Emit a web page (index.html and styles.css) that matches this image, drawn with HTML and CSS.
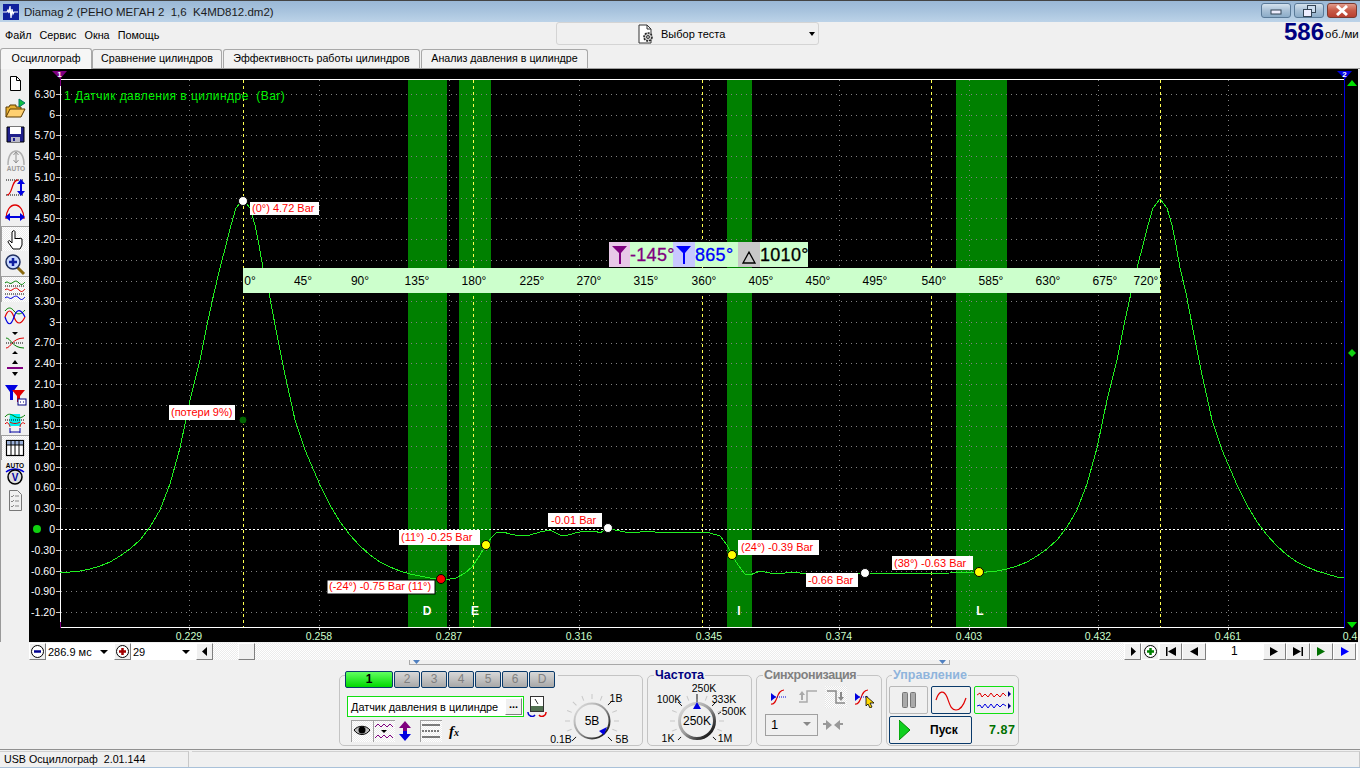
FILE: index.html
```html
<!DOCTYPE html>
<html lang="ru">
<head>
    <meta charset="UTF-8">
    <title>Diamag 2</title>
    <link rel="stylesheet" href="styles.css">
</head>
<body>
<div class="window">
    <!-- заголовок окна -->
    <div class="titlebar">
        <svg class="app-icon" width="16" height="16" viewBox="0 0 16 16"><rect width="16" height="16" fill="#10209c"/><path d="M0 8h4l1-2 1 3 1-7 1 12 1-9 1 5 1-2h4" fill="none" stroke="#fff" stroke-width="1.2"/></svg>
        <span class="title-text">Diamag 2 (РЕНО МЕГАН 2&nbsp; 1,6&nbsp; K4MD812.dm2)</span>
        <div class="win-buttons">
            <div class="win-btn"><svg width="12" height="8" viewBox="0 0 12 8"><rect x="1" y="3" width="10" height="4" fill="#eef" stroke="#345"/></svg></div>
            <div class="win-btn"><svg width="13" height="12" viewBox="0 0 13 12"><rect x="4.5" y=".5" width="8" height="7" fill="#cde" stroke="#345"/><rect x=".5" y="4.5" width="8" height="7" fill="#eef" stroke="#345"/></svg></div>
            <div class="win-btn win-close"><svg width="14" height="11" viewBox="0 0 14 11"><path d="M2 1l10 9M12 1L2 10" stroke="#fff" stroke-width="3"/></svg></div>
        </div>
    </div>

    <!-- меню -->
    <div class="menubar">
        <div class="menu">
            <span>Файл</span><span>Сервис</span><span>Окна</span><span>Помощь</span>
        </div>
        <div class="test-select">
            <svg width="20" height="20" viewBox="0 0 20 20"><path d="M3 1h8l4 4v14H3z" fill="#fff" stroke="#333"/><path d="M11 1v4h4" fill="none" stroke="#333"/><circle cx="12" cy="13" r="4" fill="#ccc" stroke="#222" stroke-width="1.6" stroke-dasharray="2 1"/><circle cx="12" cy="13" r="1.4" fill="#fff" stroke="#222"/></svg>
            <span>Выбор теста</span>
            <i class="select-arrow"></i>
        </div>
        <div class="rpm"><b>586</b><span>об./ми</span></div>
    </div>

    <!-- вкладки -->
    <div class="tabs">
        <div class="tab tab-active">Осциллограф</div>
        <div class="tab tab-2">Сравнение цилиндров</div>
        <div class="tab tab-3">Эффективность работы цилиндров</div>
        <div class="tab tab-4">Анализ давления в цилиндре</div>
    </div>

    <div class="main">
        <!-- панель инструментов -->
        <div class="toolbar">
            <div class="tool h27"><svg width="24" height="24" viewBox="0 0 24 24"><path d="M7.5 5.5h6l4 4v10h-10z" fill="#fff" stroke="#000"/><path d="M13.5 5.5v4h4" fill="none" stroke="#000"/></svg></div>
            <div class="tool h26"><svg width="24" height="24" viewBox="0 0 24 24"><path d="M3 20V10h3l1-2h6v2h5v3" fill="#e8b030" stroke="#5a3a00"/><path d="M3 20l4-8h15l-4 8z" fill="#ffd070" stroke="#5a3a00"/><path d="M16 2l6 4-6 4z" fill="#10c040" stroke="#076"/></svg></div>
            <div class="tool h24"><svg width="24" height="24" viewBox="0 0 24 24"><path d="M4 5h17v15H4z" fill="#20208c" stroke="#000"/><rect x="7" y="5" width="11" height="7" fill="#fff"/><rect x="8" y="15" width="9" height="5" fill="#b8b8c8"/><rect x="10" y="16" width="2" height="3" fill="#20208c"/></svg></div>
            <div class="tool h28"><svg width="24" height="24" viewBox="0 0 24 24"><path d="M5 17c0-10 4-14 8-14s8 4 8 14" fill="none" stroke="#b0b0b0" stroke-width="1.5"/><path d="M13 5v9M10.500 7l2.500-3 2.500 3M10.500 12l2.500 3 2.500-3" fill="none" stroke="#909090"/><text class="auto-text auto-gray" x="13" y="23">AUTO</text></svg></div>
            <div class="tool h26"><svg width="24" height="24" viewBox="0 0 24 24"><path d="M3 5h18M3 20h18" stroke="#000" stroke-dasharray="1 1"/><path d="M4 20c6 0 4-15 11-15" fill="none" stroke="#e00000" stroke-width="1.3"/><path d="M18 6v13" stroke="#0000e0" stroke-width="2"/><path d="M14 9l4-5 4 5zM14 16l4 5 4-5z" fill="#0000e0"/></svg></div>
            <div class="tool h26"><svg width="24" height="24" viewBox="0 0 24 24"><path d="M3 18c0-8 4-14 9-14s9 6 9 14" fill="none" stroke="#e00000" stroke-width="1.3"/><path d="M5 16h14" stroke="#0000e0" stroke-width="2"/><path d="M7 12l-5 4 5 4zM17 12l5 4-5 4z" fill="#0000e0"/></svg></div>
            <div class="tool h25 pressed"><svg width="24" height="24" viewBox="0 0 24 24"><path d="M10 4c1-1 2 0 2 1v7l1-1 1 1 1-1 1 1 1-1 2 1v6l-2 4h-7l-5-7c0-1 1-2 2-1l2 2V5z" fill="#fff" stroke="#000"/></svg></div>
            <div class="tool h25"><svg width="24" height="24" viewBox="0 0 24 24"><path d="M14 15l7 7" stroke="#8a6a10" stroke-width="3"/><circle cx="10" cy="10" r="7" fill="#c8d8ff" stroke="#203060" stroke-width="1.500"/><path d="M6 10h8M10 6v8" stroke="#1020a0" stroke-width="2.500"/></svg></div>
            <div class="tool h26 pressed"><svg width="24" height="24" viewBox="0 0 24 24"><path d="M2 6c3-3 4 2 7 0s4-3 7 0 4 1 6-1" fill="none" stroke="#008000"/><path d="M2 9h20M2 17h20" stroke="#000" stroke-dasharray="1 1"/><path d="M2 13c3-3 4 2 7 0s4-3 7 0 4 1 6-1" fill="none" stroke="#e00000"/><path d="M2 21c3-3 4 2 7 0s4-3 7 0 4 1 6-1" fill="none" stroke="#0000e0"/></svg></div>
            <div class="tool h28"><svg width="24" height="24" viewBox="0 0 24 24"><path d="M2 7c3-4 6-4 9 0s7 4 11-1" fill="none" stroke="#008000"/><path d="M2 13c3-8 6-8 9 0s7 8 11 0" fill="none" stroke="#e00000" stroke-width="1.200"/><path d="M2 13c3 9 6 9 9 0s7-8 11 0" fill="none" stroke="#0000e0" stroke-width="1.200"/></svg></div>
            <div class="tool h25"><svg width="24" height="24" viewBox="0 0 24 24"><path d="M9 1h6l-3 3zM9 23h6l-3-3z" fill="#000"/><path d="M3 7c5 0 6 10 18 10" fill="none" stroke="#008000"/><path d="M3 17c5 0 6-10 18-10" fill="none" stroke="#e00000"/><path d="M3 12h18" stroke="#000" stroke-dasharray="1 1"/></svg></div>
            <div class="tool h25"><svg width="24" height="24" viewBox="0 0 24 24"><path d="M9 8l3-4 3 4zM9 16l3 4 3-4z" fill="#000"/><rect x="4" y="11" width="16" height="2" fill="#800080"/></svg></div>
            <div class="tool h28"><svg width="24" height="24" viewBox="0 0 24 24"><path d="M2 3h13l-5 7v8l-3 0v-8z" fill="#0000e0"/><path d="M9 8h13l-5 6v6h-3v-6z" fill="#e00000"/><rect x="15" y="17" width="8" height="6" fill="#fff" stroke="#000080"/><path d="M17 20h1M20 20h1" stroke="#000080"/></svg></div>
            <div class="tool h27"><svg width="24" height="24" viewBox="0 0 24 24"><path d="M7 4h10l1 12H6z" fill="#00f0f0"/><path d="M2 7c3-4 6-3 9-1s7 3 11-1" fill="none" stroke="#008000"/><path d="M2 10h20" stroke="#000" stroke-dasharray="1 1"/><path d="M2 14c3-4 5 2 5 3M17 17c0-3 3-6 5-3M7 12c3 2 7 2 10 0" fill="none" stroke="#e00000"/><path d="M7 22h10M7 18v5M17 18v5" stroke="#0000a0"/></svg></div>
            <div class="tool h25 pressed"><svg width="24" height="24" viewBox="0 0 24 24"><rect x="3.500" y="4.500" width="17" height="15" fill="#fff" stroke="#000" stroke-width="1.200"/><rect x="4" y="5" width="16" height="4" fill="#9ab0d8"/><path d="M4 9h16M8 5v14M12 5v14M16 5v14" stroke="#000"/></svg></div>
            <div class="tool h27"><svg width="24" height="24" viewBox="0 0 24 24"><text class="auto-text" x="12" y="6">AUTO</text><path d="M3 10c5-4 13-4 18 0" fill="none" stroke="#0000e0" stroke-width="1.500"/><circle cx="12" cy="15" r="7" fill="#ddd" stroke="#000" stroke-width="1.500"/><text class="auto-text auto-v" x="12" y="18.500">V</text></svg></div>
            <div class="tool h26"><svg width="24" height="24" viewBox="0 0 24 24"><path d="M6.500 2.500h8l4 4v16h-12z" fill="#f0f0f0" stroke="#777"/><path d="M8 8l1 1 2-2M8 13l1 1 2-2M8 18l1 1 2-2M12 8h4M12 13h4M12 18h4" fill="none" stroke="#888"/></svg></div>
        </div>

        <!-- экран осциллографа -->
        <svg class="scope" width="1329" height="573" viewBox="29 69 1329 573">
            <rect x="29" y="69" width="1329" height="573" fill="#000"/>
            <g fill="#008000">
                <rect x="408" y="79" width="39" height="548"/>
                <rect x="459" y="79" width="32" height="548"/>
                <rect x="727" y="79" width="25" height="548"/>
                <rect x="956" y="79" width="51" height="548"/>
            </g>
            <path class="grid" d="M61 94H1344M61 115H1344M61 135H1344M61 156H1344M61 177H1344M61 198H1344M61 218H1344M61 239H1344M61 260H1344M61 281H1344M61 301H1344M61 322H1344M61 343H1344M61 363H1344M61 384H1344M61 405H1344M61 426H1344M61 446H1344M61 467H1344M61 488H1344M61 508H1344M61 550H1344M61 571H1344M61 591H1344M61 612H1344"/>
            <path class="grid" d="M189 80V627M319 80V627M449 80V627M579 80V627M709 80V627M839 80V627M969 80V627M1098 80V627M1228 80V627"/>
            <path class="ticks" d="M56 94h4M56 115h4M56 135h4M56 156h4M56 177h4M56 198h4M56 218h4M56 239h4M56 260h4M56 281h4M56 301h4M56 322h4M56 343h4M56 363h4M56 384h4M56 405h4M56 426h4M56 446h4M56 467h4M56 488h4M56 508h4M56 529h4M56 550h4M56 571h4M56 591h4M56 612h4M189 627v3M319 627v3M449 627v3M579 627v3M709 627v3M839 627v3M969 627v3M1098 627v3M1228 627v3"/>
            <path class="frame" d="M60.500 79.500H1344M60.500 80V627.500M60 627.500H1344"/>
            <path class="marker" d="M60.500 78v8M60.500 622v6" stroke="#800080"/>
            <path class="marker" d="M1344.500 76V628" stroke="#0000e0"/>
            <path class="tdc" d="M243.500 80V627M473.500 80V627M702.500 80V627M931.500 80V627M1160.500 80V627"/>
            <path class="zero" d="M61 529.500H1344"/>

            <polyline class="trace" points="60,573 70,572 80,571 90,569 100,566 110,562 120,556 130,549 140,540 150,527 160,510 170,484 180,448 190,400 200,360 207,325 214,293 220,268 226,245 231,225 236,208 243,199 250,208 255,225 259,245 263,268 269,293 276,330 284,370 295,420 305,450 320,485 330,505 340,522 350,535 360,546 370,555 380,562 390,567 400,571 410,574 420,576 430,578 441,579 450,579 456,578 465,573 472,567 480,555 486,545 492,537 497,532 503,532 510,534 520,536 530,535 540,532 550,530 560,535 565,536 575,533 585,531 595,531 600,533 608,528 615,530 625,532 640,532 650,531 660,533 670,532 680,533 690,532 700,532 710,533 720,536 727,545 732,555 738,565 745,574 750,575 760,571 770,573 780,574 790,572 800,573 810,574 820,573 840,574 865,573 900,574 950,573 979,572 987,572 997,571 1007,569 1017,566 1027,562 1037,556 1047,549 1057,540 1067,527 1077,510 1087,484 1097,448 1107,400 1117,360 1124,325 1131,293 1137,268 1143,245 1148,225 1153,208 1160,199 1167,208 1172,225 1176,245 1180,268 1186,293 1193,330 1201,370 1212,420 1222,450 1237,485 1247,505 1257,522 1267,535 1277,546 1287,555 1297,562 1307,567 1317,571 1327,574 1337,577 1344,578"/>

            <text class="ylab" x="55" y="98">6.30</text><text class="ylab" x="55" y="118">6</text><text class="ylab" x="55" y="139">5.70</text><text class="ylab" x="55" y="160">5.40</text><text class="ylab" x="55" y="181">5.10</text><text class="ylab" x="55" y="202">4.80</text><text class="ylab" x="55" y="222">4.50</text><text class="ylab" x="55" y="243">4.20</text><text class="ylab" x="55" y="264">3.90</text><text class="ylab" x="55" y="284">3.60</text><text class="ylab" x="55" y="305">3.30</text><text class="ylab" x="55" y="326">3</text><text class="ylab" x="55" y="346">2.70</text><text class="ylab" x="55" y="367">2.40</text><text class="ylab" x="55" y="388">2.10</text><text class="ylab" x="55" y="408">1.80</text><text class="ylab" x="55" y="429">1.50</text><text class="ylab" x="55" y="450">1.20</text><text class="ylab" x="55" y="471">0.90</text><text class="ylab" x="55" y="491">0.60</text><text class="ylab" x="55" y="512">0.30</text><text class="ylab" x="55" y="533">0</text><text class="ylab" x="55" y="554">-0.30</text><text class="ylab" x="55" y="575">-0.60</text><text class="ylab" x="55" y="595">-0.90</text><text class="ylab" x="55" y="616">-1.20</text>
            <text class="xlab" x="189" y="640">0.229</text><text class="xlab" x="319" y="640">0.258</text><text class="xlab" x="449" y="640">0.287</text><text class="xlab" x="579" y="640">0.316</text><text class="xlab" x="709" y="640">0.345</text><text class="xlab" x="839" y="640">0.374</text><text class="xlab" x="969" y="640">0.403</text><text class="xlab" x="1098" y="640">0.432</text><text class="xlab" x="1228" y="640">0.461</text><text class="xlab" x="1350" y="640">0.4</text>

            <text class="chan-title" x="64" y="100">1 Датчик давления в цилиндре&#160; (Bar)</text>
            <text class="band" x="427" y="615">D</text><text class="band" x="475" y="615">E</text><text class="band" x="739" y="615">I</text><text class="band" x="980" y="615">L</text>

            <!-- шкала градусов -->
            <rect x="243" y="268" width="917" height="25" fill="#ccffcc"/>
            <g class="deg">
                <text x="250" y="285">0°</text><text x="303" y="285">45°</text><text x="360" y="285">90°</text><text x="417" y="285">135°</text><text x="474" y="285">180°</text><text x="532" y="285">225°</text><text x="589" y="285">270°</text><text x="646" y="285">315°</text><text x="704" y="285">360°</text><text x="761" y="285">405°</text><text x="818" y="285">450°</text><text x="875" y="285">495°</text><text x="934" y="285">540°</text><text x="991" y="285">585°</text><text x="1048" y="285">630°</text><text x="1105" y="285">675°</text><text x="1146" y="285">720°</text>
            </g>

            <!-- метки -->
            <g class="tag">
                <rect x="250" y="202" width="69" height="13"/><text x="252" y="212">(0°) 4.72 Bar</text>
                <rect x="169" y="405" width="66" height="15"/><text x="171" y="416">(потери 9%)</text>
                <rect x="399" y="530" width="81" height="15"/><text x="401" y="541">(11°) -0.25 Bar</text>
                <rect x="327" y="580" width="108" height="14" class="tag-dark"/><text x="329" y="590">(-24°) -0.75 Bar (11°)</text>
                <rect x="548" y="513" width="54" height="14"/><text x="551" y="524">-0.01 Bar</text>
                <rect x="738" y="540" width="81" height="15"/><text x="741" y="551">(24°) -0.39 Bar</text>
                <rect x="806" y="573" width="52" height="14"/><text x="808" y="584">-0.66 Bar</text>
                <rect x="892" y="556" width="81" height="14"/><text x="894" y="567">(38°) -0.63 Bar</text>
            </g>
            <circle class="dot" cx="243" cy="201" r="4.500" fill="#fff"/>
            <circle class="dot" cx="243" cy="420" r="4" fill="#006400"/>
            <circle class="dot" cx="441" cy="579" r="4.500" fill="#f00"/>
            <circle class="dot" cx="486" cy="545" r="4.500" fill="#ff0"/>
            <circle class="dot" cx="608" cy="528" r="4.500" fill="#fff"/>
            <circle class="dot" cx="732" cy="555" r="4.500" fill="#ff0"/>
            <circle class="dot" cx="865" cy="573" r="4.500" fill="#fff"/>
            <circle class="dot" cx="979" cy="572" r="4.500" fill="#ff0"/>
            <circle cx="37" cy="529" r="4" fill="#10d010"/>

            <!-- курсоры -->
            <path d="M52 71h15l-7 8z" fill="#800080"/><text class="cur-num" x="59.500" y="77">1</text>
            <path d="M1337 71h15l-7 8z" fill="#0000e0"/><text class="cur-num" x="1344.500" y="77">2</text>
            <path d="M1347 86l5-6 5 6zM1347 622l5 6 5-6z" fill="#00e000"/>
            <path d="M1352 349l4 4-4 4-4-4z" fill="#10d010"/>

            <!-- табло углов -->
            <rect x="609" y="242" width="199" height="25" fill="#ccffcc"/>
            <rect x="609" y="242" width="21" height="25" fill="#e8c8e8"/>
            <rect x="673" y="242" width="22" height="25" fill="#c8c8ff"/>
            <rect x="738" y="242" width="22" height="25" fill="#c8c8c8"/>
            <path d="M612 246h15l-6 7v11h-2v-11z" fill="#800080"/>
            <path d="M676 246h15l-6 7v11h-2v-11z" fill="#0000ff"/>
            <path d="M743 263l6-11 6 11z" fill="none" stroke="#000" stroke-width="1.300"/>
            <svg x="609" y="242" width="199" height="25" viewBox="609 242 199 25">
                <text class="angle angle-purple" x="630" y="261">-145°</text>
                <text class="angle angle-blue" x="695" y="261">865°</text>
                <text class="angle angle-black" x="760" y="261">1010°</text>
            </svg>
        </svg>
    </div>

    <!-- полоса прокрутки -->
    <div class="strip">
        <div class="sbtn"><svg width="15" height="15" viewBox="0 0 15 15"><circle cx="7.500" cy="7.500" r="6" fill="#fff" stroke="#000"/><path d="M4 7.500h7" stroke="#000090" stroke-width="2.500"/></svg></div>
        <div class="combo combo-time"><span>286.9 мс</span><i class="combo-arrow"></i></div>
        <div class="sbtn"><svg width="15" height="15" viewBox="0 0 15 15"><circle cx="7.500" cy="7.500" r="6" fill="#fff" stroke="#000"/><path d="M4 7.500h7M7.500 4v7" stroke="#a00000" stroke-width="2.500"/></svg></div>
        <div class="combo combo-num"><span>29</span><i class="combo-arrow"></i></div>
        <div class="sbtn"><svg width="8" height="9" viewBox="0 0 8 9"><path d="M6 0v9L1 4.500z"/></svg></div>
        <div class="track"><div class="thumb"></div></div>
        <div class="sbtn"><svg width="8" height="9" viewBox="0 0 8 9"><path d="M2 0v9l5-4.500z"/></svg></div>
        <div class="sbtn sbtn-plain"><svg width="15" height="15" viewBox="0 0 15 15"><circle cx="7.500" cy="7.500" r="6" fill="#fff" stroke="#000"/><path d="M4 7.500h7M7.500 4v7" stroke="#008000" stroke-width="2.500"/></svg></div>
        <div class="sbtn wide"><svg width="12" height="9" viewBox="0 0 12 9"><path d="M1 0h1.500v9H1zM11 0v9L3 4.500z"/></svg></div>
        <div class="sbtn wide"><svg width="12" height="9" viewBox="0 0 12 9"><path d="M10 0v9L2 4.500z"/></svg></div>
        <div class="page-num">1</div>
        <div class="sbtn wide"><svg width="12" height="9" viewBox="0 0 12 9"><path d="M2 0v9l8-4.500z"/></svg></div>
        <div class="sbtn wide"><svg width="12" height="9" viewBox="0 0 12 9"><path d="M1 0v9l8-4.500zM9.500 0H11v9H9.500z"/></svg></div>
        <div class="sbtn wide"><svg width="12" height="9" viewBox="0 0 12 9"><path d="M2 0v9l8-4.500z" fill="#007000"/></svg></div>
        <div class="sbtn wide"><svg width="12" height="9" viewBox="0 0 12 9"><path d="M2 0v9l8-4.500z" fill="#0000ff"/></svg></div>
    </div>

    <div class="splitter">
        <svg width="7" height="4" viewBox="0 0 7 4"><path d="M0 0h7L3.500 4z" fill="#5080c0"/></svg>
        <svg width="7" height="4" viewBox="0 0 7 4"><path d="M0 0h7L3.500 4z" fill="#5080c0"/></svg>
    </div>

    <!-- нижняя панель -->
    <div class="dock">
        <div class="group group-chan">
            <div class="chan-tabs">
                <div class="chan-tab chan-on">1</div><div class="chan-tab">2</div><div class="chan-tab">3</div><div class="chan-tab">4</div><div class="chan-tab">5</div><div class="chan-tab">6</div><div class="chan-tab">D</div>
            </div>
            <div class="chan-left">
                <div class="chan-row">
                    <div class="sensor"><span>Датчик давления в цилиндре</span><div class="dots">...</div></div>
                    <svg class="meter" width="20" height="21" viewBox="0 0 20 21"><rect x="3.500" y=".5" width="13" height="15" fill="#fff" stroke="#333"/><path d="M8 3l3 5" stroke="#333"/><rect x="4" y="10" width="12" height="5" fill="#507050"/><path d="M1 16a4 4 0 0 0 7 3" fill="none" stroke="#0000d0" stroke-width="1.500"/><path d="M19 16a4 4 0 0 1-7 3" fill="none" stroke="#e00000" stroke-width="1.500"/></svg>
                </div>
                <div class="chan-icons">
                    <div class="mini pressed"><svg width="20" height="18" viewBox="0 0 20 18"><path d="M2 8c4-5 12-5 16 0-4 6-12 6-16 0z" fill="#bbb" stroke="#000"/><circle cx="10" cy="8" r="3.500" fill="#000"/></svg></div>
                    <div class="mini pressed"><svg width="20" height="20" viewBox="0 0 20 20"><path d="M1 6l3-3 3 3 3-3 3 3 3-3 3 3M1 17l3-3 3 3 3-3 3 3 3-3 3 3" fill="none" stroke="#800080"/><path d="M7 9h6l-3 3z" fill="#000"/></svg></div>
                    <svg class="mini-plain" width="14" height="20" viewBox="0 0 14 20"><path d="M7 0l6 7H9v3H5V7H1z" fill="#800080"/><path d="M7 20l6-7H9v-3H5v3H1z" fill="#0000e0"/></svg>
                    <div class="mini pressed mini-lines"><svg width="20" height="18" viewBox="0 0 20 18"><path d="M1 3h18M1 15h18" stroke="#000" stroke-width="1.200"/><path d="M1 9h18" stroke="#000" stroke-dasharray="2 1"/></svg></div>
                    <span class="fx"><i>f</i><small>x</small></span>
                </div>
            </div>
            <svg class="knob" width="91" height="69" viewBox="548 676 91 69">
                <defs>
                    <linearGradient id="ringGrad" x1="0" y1="0" x2="1" y2="1"><stop offset="0" stop-color="#e8e8e8"/><stop offset=".5" stop-color="#999"/><stop offset=".85" stop-color="#222"/></linearGradient>
                    <g id="knobTicks" stroke="#c8c8c8">
                        <path d="M0-22v-5" transform="rotate(-135)"/><path d="M0-22v-5" transform="rotate(-112)"/><path d="M0-22v-5" transform="rotate(-90)"/><path d="M0-22v-5" transform="rotate(-67)"/><path d="M0-22v-5" transform="rotate(-45)"/><path d="M0-22v-5" transform="rotate(-22)"/><path d="M0-22v-5"/><path d="M0-22v-5" transform="rotate(22)"/><path d="M0-22v-5" transform="rotate(45)"/><path d="M0-22v-5" transform="rotate(67)"/><path d="M0-22v-5" transform="rotate(90)"/><path d="M0-22v-5" transform="rotate(112)"/><path d="M0-22v-5" transform="rotate(135)"/>
                    </g>
                </defs>
                <use href="#knobTicks" x="592" y="721"/>
                <path d="M608 705l4-4M608 737l4 4M576 737l-4 4" stroke="#222"/>
                <circle cx="592" cy="721" r="17.500" fill="#f0f0f0" stroke="url(#ringGrad)" stroke-width="2"/>
                <path d="M607 727l-8 4 5 4z" fill="#0000e0"/>
                <text class="knob-mid" x="592" y="725">5В</text>
                <text class="knob-lab" x="616" y="702">1В</text>
                <text class="knob-lab" x="561" y="743">0.1В</text>
                <text class="knob-lab" x="622" y="743">5В</text>
            </svg>
        </div>

        <div class="group group-freq">
            <div class="legend legend-freq">Частота</div>
            <svg class="knob" width="103" height="69" viewBox="647 676 103 69">
                <use href="#knobTicks" x="696" y="721"/>
                <path d="M696 702v-8M681 706l-4-4M711 706l4-4M717 714l3-2M680 737l-3 3M712 737l3 3" stroke="#222"/>
                <circle cx="696" cy="721" r="17.500" fill="#f0f0f0" stroke="url(#ringGrad)" stroke-width="3"/>
                <path d="M696 702l4 7h-8z" fill="#0000e0"/>
                <text class="knob-mid" x="696" y="725">250K</text>
                <text class="knob-lab" x="703" y="692">250K</text>
                <text class="knob-lab" x="668" y="703">100K</text>
                <text class="knob-lab" x="723" y="703">333K</text>
                <text class="knob-lab" x="733" y="715">500K</text>
                <text class="knob-lab" x="667" y="742">1K</text>
                <text class="knob-lab" x="724" y="742">1M</text>
            </svg>
        </div>

        <div class="group group-sync">
            <div class="legend legend-sync">Синхронизация</div>
            <div class="sync-icons">
                <svg width="22" height="22" viewBox="0 0 22 22"><path d="M2 18c7 1 5-14 13-14" fill="none" stroke="#e00000" stroke-width="1.200"/><path d="M6 11h12" stroke="#0000e0" stroke-dasharray="1 1"/><path d="M2 7l5 4-5 4z" fill="#0000e0"/></svg>
                <svg width="22" height="22" viewBox="0 0 22 22"><path d="M2 16h8V5h10" fill="none" stroke="#aaa" stroke-width="1.500"/><path d="M5 5l3 4H6v5H4V9H2z" fill="#aaa"/></svg>
                <div class="sync-pressed"><svg width="22" height="22" viewBox="0 0 22 22"><path d="M2 5h9v12h9" fill="none" stroke="#888" stroke-width="1.500"/><path d="M15 6h2v5h2l-3 4-3-4h2z" fill="#888"/></svg></div>
                <svg width="22" height="22" viewBox="0 0 22 22"><path d="M2 18c7 1 5-14 13-14" fill="none" stroke="#e00000" stroke-width="1.200"/><path d="M6 11h10" stroke="#0000e0" stroke-dasharray="1 1"/><path d="M2 7l5 4-5 4z" fill="#0000e0"/><path d="M13 10l8 7-4 0 2 4-2 1-2-4-2 2z" fill="#ffd800" stroke="#000" stroke-width=".8"/></svg>
            </div>
            <div class="sync-row">
                <div class="sync-combo"><span>1</span><i class="combo-arrow combo-gray"></i></div>
                <svg width="20" height="10" viewBox="0 0 20 10"><path d="M0 4h3M17 4h3" stroke="#999" stroke-width="2"/><path d="M3 0l6 5-6 5zM17 0l-6 5 6 5z" fill="#999"/></svg>
            </div>
        </div>

        <div class="group group-ctrl">
            <div class="legend legend-ctrl">Управление</div>
            <div class="ctrl-row">
                <div class="cbtn cbtn-pause"><svg width="14" height="16" viewBox="0 0 14 16"><rect x=".5" y=".5" width="5" height="15" rx="1" fill="#aaa" stroke="#777"/><rect x="8.500" y=".5" width="5" height="15" rx="1" fill="#aaa" stroke="#777"/></svg></div>
                <div class="cbtn cbtn-navy"><svg width="32" height="22" viewBox="0 0 32 22"><path d="M1 11C4 1 9 1 12 8c3 8 4 13 9 13 5 0 8-6 10-12" fill="none" stroke="#e00000" stroke-width="1.200"/></svg></div>
                <div class="cbtn cbtn-green"><svg width="36" height="22" viewBox="0 0 36 22"><path d="M1 6l3-2 2 4 3-3 3 3 3-4 3 4 3-3 3 3 3-4 3 3" fill="none" stroke="#e00000"/><path d="M32 2v6l3-3z" fill="#000080"/><path d="M1 17l3-1 2 3 3-4 3 4 3-4 3 4 3-4 3 3 3-3 3 2" fill="none" stroke="#0000e0"/><path d="M32 14v6l3-3z" fill="#000080"/></svg></div>
            </div>
            <div class="ctrl-row">
                <div class="cbtn cbtn-navy cbtn-start">
                    <svg width="11" height="20" viewBox="0 0 11 20"><path d="M0 0l11 10L0 20z" fill="#10d020" stroke="#080"/></svg>
                    <span>Пуск</span>
                </div>
                <div class="speed">7.87</div>
            </div>
        </div>
    </div>

    <div class="status">
        <div class="status-cell status-first">USB Осциллограф&nbsp; 2.01.144</div>
        <div class="status-cell status-rest"></div>
    </div>
    <div class="edge"></div>
</div>
</body>
</html>
```

FILE: styles.css
```css
html, body {
    margin: 0;
    padding: 0;
    height: 100%;
    overflow: hidden;
}
body {
    font-family: "Liberation Sans", Arial, sans-serif;
    font-size: 11px;
    color: #000;
    background-color: #f0f0f0;
}
svg {
    display: block;
    flex: none;
}
.window {
    width: 1360px;
    height: 768px;
    display: flex;
    flex-direction: column;
    overflow: hidden;
}

/* заголовок */
.titlebar {
    height: 21px;
    flex: none;
    display: flex;
    align-items: center;
    border-top: 1px solid #444;
    background: linear-gradient(#9ab8d6, #a9c4de 50%, #bcd3e8);
    padding-left: 3px;
}
.title-text {
    margin-left: 5px;
    font-size: 11.500px;
    color: #1c1c1c;
}
.win-buttons {
    margin-left: auto;
    margin-right: 3px;
    display: flex;
    gap: 3px;
    align-self: flex-start;
    margin-top: 2px;
}
.win-btn {
    width: 30px;
    height: 15px;
    box-sizing: border-box;
    border: 1px solid #5a7a98;
    border-radius: 3px;
    background: linear-gradient(#d4e2ee, #a8c0d6 50%, #8cacc8);
    display: flex;
    align-items: center;
    justify-content: center;
}
.win-close {
    background: linear-gradient(#e09c8c, #c85a46 50%, #b84030);
    border-color: #7a3a30;
}

/* меню */
.menubar {
    height: 25px;
    flex: none;
    display: flex;
}
.menu {
    width: 556px;
    box-sizing: border-box;
    padding: 7px 0 0 5px;
    display: flex;
    gap: 8px;
    font-size: 10.800px;
}
.test-select {
    width: 263px;
    height: 23px;
    box-sizing: border-box;
    border: 1px solid #d4d4d4;
    border-radius: 3px;
    display: flex;
    align-items: center;
    padding-left: 79px;
    gap: 5px;
    position: relative;
}
.select-arrow {
    position: absolute;
    right: 3px;
    top: 9px;
    border: 3px solid transparent;
    border-top: 4px solid #000;
}
.rpm {
    margin-left: auto;
    display: flex;
    align-items: flex-end;
    margin-top: -1px;
    height: 23px;
    white-space: nowrap;
    width: 76px;
}
.rpm b {
    font-size: 24px;
    line-height: 24px;
    color: #000080;
}
.rpm span {
    font-size: 11.500px;
    margin-left: 1px;
    line-height: 20px;
}

/* вкладки */
.tabs {
    height: 22px;
    flex: none;
    display: flex;
    align-items: flex-end;
    border-bottom: 1px solid #a0a0a0;
    box-sizing: border-box;
}
.tab {
    height: 19px;
    box-sizing: border-box;
    border: 1px solid #a8a8a8;
    border-bottom: none;
    border-radius: 3px 3px 0 0;
    margin-right: 1px;
    text-align: center;
    line-height: 16px;
    font-size: 10.700px;
    background-color: #f2f2f2;
}
.tab-active {
    width: 92px;
    height: 21px;
    margin-bottom: -1px;
    background-color: #f6f6f6;
    margin-right: 0;
    line-height: 18px;
}
.tab-2 { width: 130px; }
.tab-3 { width: 197px; }
.tab-4 { width: 167px; }

/* центральная часть */
.main {
    flex: none;
    height: 573px;
    display: flex;
}
.toolbar {
    width: 29px;
    box-sizing: border-box;
    border-left: 1px solid #999;
    flex: none;
}
.tool {
    display: flex;
    align-items: center;
    justify-content: center;
    padding-right: 1px;
}
.h24 { height: 24px; }
.h25 { height: 25px; }
.h26 { height: 26px; }
.h27 { height: 27px; }
.h28 { height: 28px; }
.pressed {
    background-color: #fff;
    background-image: repeating-conic-gradient(#ececec 0 25%, #fff 0 50%);
    background-size: 2px 2px;
    box-shadow: inset 1px 1px 0 #a0a0a0;
}
.auto-text {
    font-size: 6.500px;
    font-weight: bold;
    text-anchor: middle;
    fill: #000;
}
.auto-gray { fill: #999; }
.auto-v {
    font-size: 10px;
    fill: #0000a0;
}

/* осциллограф */
.grid {
    fill: none;
    stroke: #808080;
    stroke-dasharray: 1 4;
    shape-rendering: crispEdges;
}
.ticks {
    fill: none;
    stroke: #c8c8c8;
    shape-rendering: crispEdges;
}
.frame {
    fill: none;
    stroke: #fff;
    shape-rendering: crispEdges;
}
.marker {
    fill: none;
    shape-rendering: crispEdges;
}
.tdc {
    fill: none;
    stroke: #ffff50;
    stroke-dasharray: 3 3;
    shape-rendering: crispEdges;
}
.zero {
    fill: none;
    stroke: #fff;
    stroke-dasharray: 2 2;
    shape-rendering: crispEdges;
}
.trace {
    fill: none;
    stroke: #20f020;
    stroke-width: 1;
    shape-rendering: crispEdges;
}
.ylab {
    fill: #fff;
    font-size: 10.500px;
    text-anchor: end;
}
.xlab {
    fill: #ccffcc;
    font-size: 10.500px;
    text-anchor: middle;
}
.chan-title {
    fill: #00f000;
    font-size: 12px;
    letter-spacing: 0.45px;
}
.band {
    fill: #fff;
    font-size: 12px;
    font-weight: bold;
    text-anchor: middle;
}
.deg text {
    fill: #000;
    font-size: 12px;
    text-anchor: middle;
}
.tag rect {
    fill: #fff;
}
.tag text {
    fill: #f00;
    font-size: 11px;
}
.tag .tag-dark {
    stroke: #000;
    stroke-width: 1;
}
.dot {
    stroke: #000;
    stroke-width: 1;
}
.cur-num {
    fill: #fff;
    font-size: 8px;
    font-weight: bold;
    text-anchor: middle;
}
.angle {
    font-size: 18px;
    letter-spacing: 0.3px;
    stroke-width: 0.3px;
}
.angle-purple { fill: #800080; stroke: #800080; }
.angle-blue { fill: #0000ff; stroke: #0000ff; }
.angle-black { fill: #000; stroke: #000; }

/* полоса прокрутки */
.strip {
    height: 17px;
    flex: none;
    margin: 1px 2px 0 29px;
    display: flex;
    background-color: #fff;
}
.sbtn {
    width: 17px;
    height: 17px;
    box-sizing: border-box;
    border: 1px solid;
    border-color: #fff #808080 #808080 #fff;
    background-color: #f0f0f0;
    display: flex;
    align-items: center;
    justify-content: center;
    flex: none;
}
.sbtn-plain {
    width: 18px;
    border-color: #fff;
}
.wide {
    width: 23.400px;
}
.combo {
    display: flex;
    align-items: center;
    position: relative;
    font-size: 11px;
    flex: none;
    padding-left: 2px;
    box-sizing: border-box;
}
.combo-time { width: 68px; }
.combo-num { width: 65px; }
.combo-arrow {
    position: absolute;
    right: 6px;
    top: 7px;
    border: 4px solid transparent;
    border-top: 4px solid #000;
    border-bottom: none;
}
.combo-gray {
    border-top-color: #888;
}
.track {
    width: 911px;
    flex: none;
    background-color: #fff;
    background-image: repeating-conic-gradient(#ececec 0 25%, #fff 0 50%);
    background-size: 2px 2px;
    padding-left: 25px;
    box-sizing: border-box;
}
.thumb {
    width: 17px;
    height: 17px;
    box-sizing: border-box;
    border: 1px solid;
    border-color: #fff #808080 #808080 #fff;
    background-color: #f0f0f0;
}
.page-num {
    width: 57px;
    flex: none;
    text-align: center;
    font-size: 12px;
    line-height: 17px;
}
.splitter {
    width: 541px;
    height: 5px;
    flex: none;
    margin: 0 0 0 409px;
    box-sizing: border-box;
    border: 1px solid #a8a8a8;
    border-top: none;
    display: flex;
    justify-content: space-between;
    padding: 0 3px;
}

/* нижняя панель */
.dock {
    height: 84px;
    flex: none;
    box-sizing: border-box;
    padding: 10px 0 0 339px;
    display: flex;
    gap: 4px;
}
.group {
    height: 71px;
    box-sizing: border-box;
    border: 1px solid #c4c4c4;
    border-radius: 5px;
    position: relative;
}
.group-chan {
    width: 304px;
    display: flex;
}
.group-freq { width: 105px; }
.group-sync {
    width: 126px;
    padding: 10px 0 0 8px;
}
.group-ctrl {
    width: 133px;
    padding: 10px 0 0 2px;
}
.legend {
    position: absolute;
    top: -8px;
    background-color: #f0f0f0;
    font-size: 12.500px;
    font-weight: bold;
    padding: 0 1px;
    white-space: nowrap;
}
.legend-freq { left: 6px; color: #000080; }
.legend-sync { left: 6px; color: #808080; letter-spacing: -0.4px; }
.legend-ctrl { left: 5px; color: #8fb4dc; }

.chan-tabs {
    position: absolute;
    left: 5px;
    top: -5px;
    display: flex;
    gap: 1px;
    padding-right: 3px;
    background-color: #f0f0f0;
}
.chan-tab {
    width: 26px;
    height: 17px;
    box-sizing: border-box;
    border: 1px solid #0a3a6a;
    border-radius: 2px;
    background: linear-gradient(#d8d8d8, #a8a8a8);
    color: #808080;
    text-align: center;
    font-size: 12px;
    line-height: 15px;
}
.chan-on {
    width: 48px;
    background: linear-gradient(#60ff60, #00d800);
    color: #000;
    font-weight: bold;
}
.chan-left {
    width: 208px;
    box-sizing: border-box;
    padding: 20px 0 0 7px;
}
.chan-row {
    display: flex;
    gap: 3px;
}
.sensor {
    width: 177px;
    height: 21px;
    box-sizing: border-box;
    border: 1px solid #10e010;
    background-color: #fff;
    display: flex;
    align-items: center;
    justify-content: space-between;
    padding: 0 1px 0 3px;
    font-size: 10.900px;
    white-space: nowrap;
}
.dots {
    width: 17px;
    height: 17px;
    box-sizing: border-box;
    border: 1px solid;
    border-color: #fff #808080 #808080 #fff;
    background-color: #f0f0f0;
    text-align: center;
    font-weight: bold;
    line-height: 10px;
}
.chan-icons {
    display: flex;
    align-items: center;
    margin: 3px 0 0 4px;
}
.mini {
    width: 22px;
    height: 22px;
    display: flex;
    align-items: center;
    justify-content: center;
}
.mini-plain {
    margin: 0 8px 0 3px;
}
.mini-lines {
    margin-right: 7px;
}
.fx {
    font-family: "Liberation Serif", serif;
    font-size: 15px;
    font-weight: bold;
}
.fx small {
    font-size: 10px;
    font-style: italic;
}
.knob-mid {
    font-size: 12px;
    text-anchor: middle;
}
.knob-lab {
    font-size: 10.500px;
    text-anchor: middle;
}
.sync-icons {
    display: flex;
    align-items: center;
    gap: 6px;
    height: 22px;
    margin-left: 4px;
}
.sync-pressed {
    background-image: repeating-conic-gradient(#e4e4e4 0 25%, #fff 0 50%);
    background-size: 2px 2px;
}
.sync-row {
    display: flex;
    align-items: center;
    gap: 5px;
    margin-top: 6px;
}
.sync-combo {
    width: 53px;
    height: 22px;
    box-sizing: border-box;
    border: 1px solid #a0a0a0;
    position: relative;
    font-size: 13px;
    line-height: 20px;
    padding-left: 5px;
}
.ctrl-row {
    display: flex;
    gap: 3px;
    margin-bottom: 2px;
    align-items: center;
}
.cbtn {
    width: 40px;
    height: 28px;
    box-sizing: border-box;
    display: flex;
    align-items: center;
    justify-content: center;
    border-radius: 2px;
}
.cbtn-pause { border: 1px solid #b8b8b8; width: 39px; }
.cbtn-navy { border: 1px solid #0a3a6a; }
.cbtn-green { border: 1px solid #10e010; }
.cbtn-start {
    width: 83px;
    justify-content: flex-start;
    padding-left: 9px;
    font-size: 12px;
    font-weight: bold;
}
.cbtn-start span {
    margin-left: 20px;
}
.speed {
    margin-left: 14px;
    font-size: 12.500px;
    font-weight: bold;
    color: #007000;
    letter-spacing: 0.5px;
}

/* строка состояния */
.status {
    height: 18px;
    flex: none;
    box-sizing: border-box;
    border-top: 1px solid #909090;
    display: flex;
    gap: 3px;
    padding-top: 1px;
}
.status-cell {
    border-top: 1px solid #d0d0d0;
    border-right: 1px solid #c8c8c8;
    font-size: 10.700px;
    line-height: 15px;
    padding-left: 4px;
    box-sizing: border-box;
}
.status-first { width: 189px; }
.status-rest { flex: 1; }
.edge {
    height: 1px;
    flex: none;
    background-color: #a9c1d9;
}
```
